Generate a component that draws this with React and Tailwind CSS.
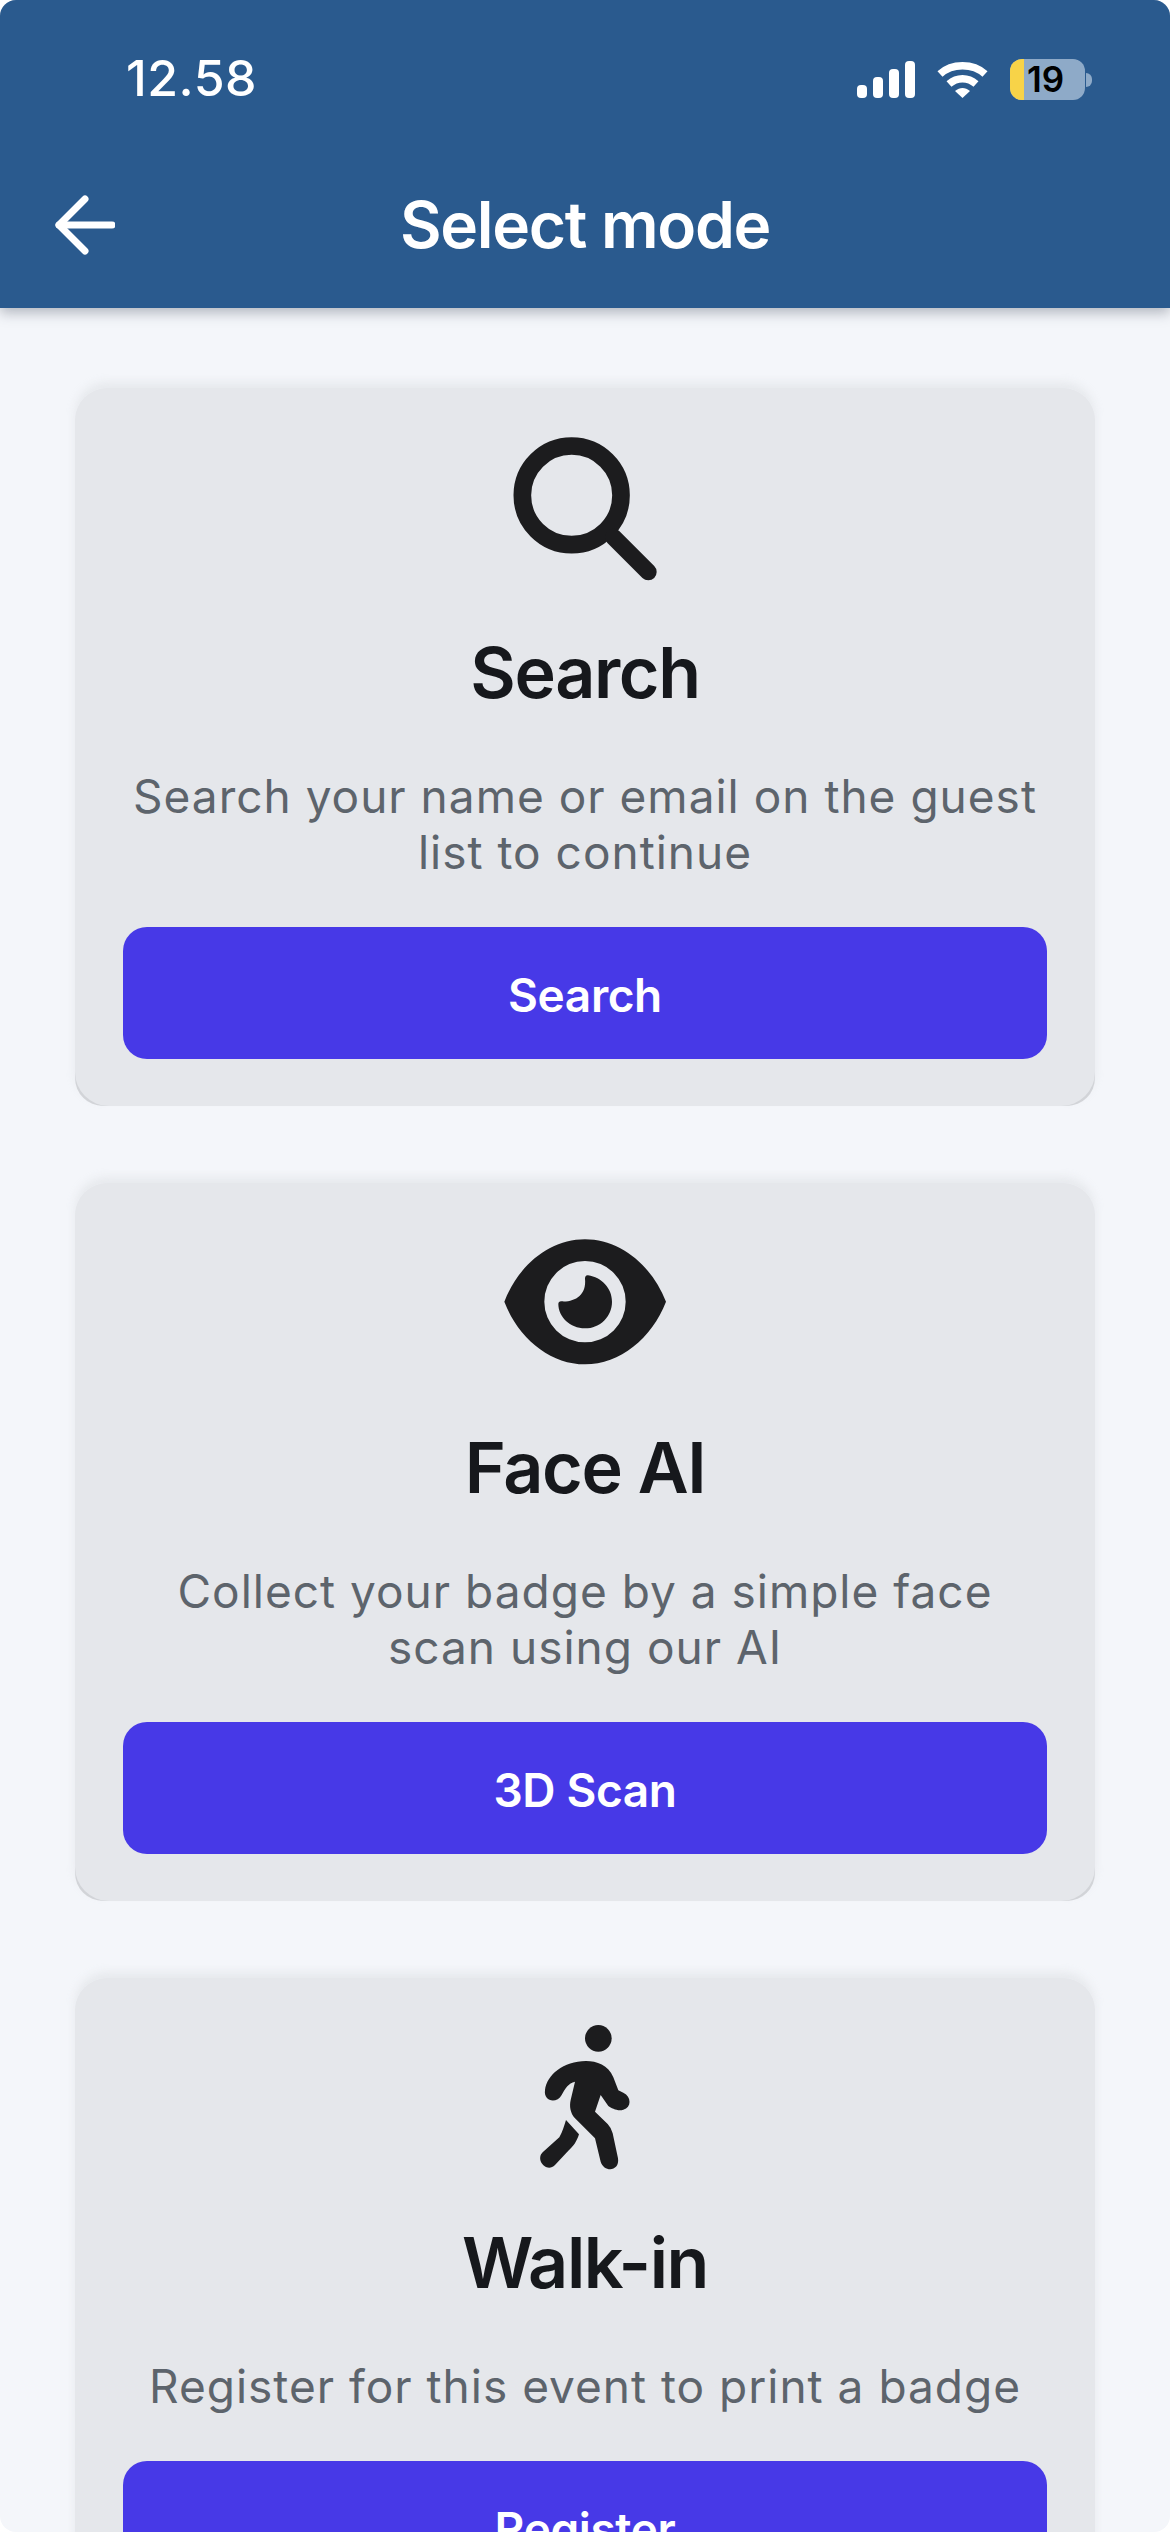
import React from "react";

const SearchIcon = () => (
  <svg width="210" height="180" viewBox="0 0 630 540" className="-translate-y-[3px]">
    <circle cx="275" cy="250" r="148" fill="none" stroke="#1c1c1e" strokeWidth="53" />
    <path d="M400 375 L505 480" fill="none" stroke="#1c1c1e" strokeWidth="50" strokeLinecap="round" />
  </svg>
);

const EyeIcon = () => (
  <svg width="250" height="176" viewBox="0 36 750 528">
    <path
      fillRule="evenodd"
      fill="#1c1c1e"
      d="M133 305 C175 195 270 118 375 118 C480 118 575 195 618 305 C575 415 480 493 375 493 C270 493 175 415 133 305 Z M375 183 A122 122 0 1 0 375 427 A122 122 0 1 0 375 183 Z"
    />
    <path
      fill="#1c1c1e"
      d="M375 236 C375 230 378 225 384 226 C425 232 456 265 456 305 C456 350 420 385 375 385 C330 385 295 350 295 312 C295 305 300 303 306 304 C345 306 380 285 375 236 Z"
    />
  </svg>
);

const WalkIcon = () => (
  <svg width="210" height="176" viewBox="0 21 630 528">
    <circle cx="355" cy="115" r="40" fill="#1c1c1e" />
    <path
      fill="#1c1c1e"
      d="M318 183 C350 183 385 195 400 232 L415 271 L430 278 C455 290 455 322 430 329 C415 335 395 325 385 318 L362 285 L345 335 L383 372 Q395 385 398 400 L414 475 C420 515 372 518 362 485 L345 415 L285 355 C270 338 268 318 272 300 L285 245 C265 250 255 265 245 285 C230 312 190 305 195 270 C200 225 250 183 318 183 Z"
    />
    <path
      fill="#1c1c1e"
      d="M258 360 L297 403 C290 425 280 440 265 452 L225 495 C200 520 165 480 188 457 L238 412 C248 395 252 378 258 360 Z"
    />
  </svg>
);

const Card = ({ icon, title, lines, action }) => (
  <div className="rounded-b-[28px] rounded-t-[32px] bg-[linear-gradient(to_bottom,#e5e7eb_50%,#d2d4d8_50%)] shadow-[0_-6px_9px_rgba(228,230,234,0.8)]">
    <div className="rounded-[34px] bg-[#e5e7eb] px-12 pt-[29px] pb-[47px] flex flex-col items-center">
      <div className="h-[176px] flex items-center justify-center">{icon}</div>
      <h2 className="mt-[39px] text-[70px] leading-[82px] font-semibold tracking-[-1.4px] text-[#16181c]">{title}</h2>
      <p className="mt-[54px] text-center text-[46px] leading-[56px] tracking-[1px] text-[#5d646c] font-normal">
        {lines.map((l) => (
          <span key={l} className="block whitespace-nowrap">{l}</span>
        ))}
      </p>
      <button className="mt-[47px] w-full h-[132px] pt-[4px] rounded-[24px] bg-[#4739e7] text-white text-[46px] font-semibold tracking-[-0.4px] flex items-center justify-center">
        {action}
      </button>
    </div>
  </div>
);

export default function App() {
  return (
    <div className="w-[1170px] h-[2532px] overflow-hidden bg-white" style={{ fontFamily: "Inter, 'Liberation Sans', sans-serif" }}>
      <div className="h-full rounded-[16px] overflow-hidden bg-[#f4f6fa]">
        <header className="relative z-10 h-[308px] bg-[#2a5a8e] text-white shadow-[0_5px_12px_rgba(60,70,85,0.35)]">
          <div className="h-[156px] flex items-start justify-between pl-[126px] pr-[78px] pt-[49px]">
            <span className="text-[50px] leading-[58px] font-medium tracking-[0.5px]">12.58</span>
            <div className="flex items-center gap-[22px] pt-[10px]">
              <svg width="58" height="38" viewBox="0 0 58 38" fill="#fff">
                <rect x="0" y="24" width="10" height="13" rx="4" />
                <rect x="16" y="16" width="10" height="21" rx="4" />
                <rect x="32" y="8" width="10" height="29" rx="4" />
                <rect x="48" y="0" width="10" height="37" rx="4" />
              </svg>
              <svg width="51" height="38" viewBox="0 0 51 38" fill="none" stroke="#fff" strokeWidth="7.5">
                <path d="M3 13 C15 2 36 2 48 13" />
                <path d="M12 23 C20 16 31 16 39 23" />
                <path d="M18 30 L25.5 37 L33 30 C28 26 23 26 18 30 Z" fill="#fff" stroke="none" />
              </svg>
              <div className="flex items-center">
                <div className="w-[75px] h-[41px] rounded-[12px] overflow-hidden bg-[#8eaac8] relative flex items-center">
                  <div className="w-[14px] h-full bg-[#f7d348]" />
                  <span className="absolute left-[17px] text-[35px] leading-[41px] font-semibold text-black">19</span>
                </div>
                <div className="w-[6px] h-[14px] rounded-r-full bg-[#8eaac8] ml-[1px]" />
              </div>
            </div>
          </div>
          <div className="relative flex items-center justify-center h-[80px] mt-[29px]">
            <svg className="absolute left-[55px]" width="60" height="60" viewBox="0 0 60 60" fill="none" stroke="#fff" strokeWidth="7" strokeLinecap="round" strokeLinejoin="round">
              <path d="M30 4 L4 30 L30 56" />
              <path d="M4 30 L57 30" />
            </svg>
            <h1 className="text-[64px] leading-[80px] font-semibold tracking-[-1.3px]">Select mode</h1>
          </div>
        </header>
        <main className="px-[75px] pt-[80px] flex flex-col gap-[77px]">
          <Card icon={<SearchIcon />} title="Search" lines={["Search your name or email on the guest", "list to continue"]} action="Search" />
          <Card icon={<EyeIcon />} title="Face AI" lines={["Collect your badge by a simple face", "scan using our AI"]} action="3D Scan" />
          <Card icon={<WalkIcon />} title="Walk-in" lines={["Register for this event to print a badge"]} action="Register" />
        </main>
      </div>
    </div>
  );
}
